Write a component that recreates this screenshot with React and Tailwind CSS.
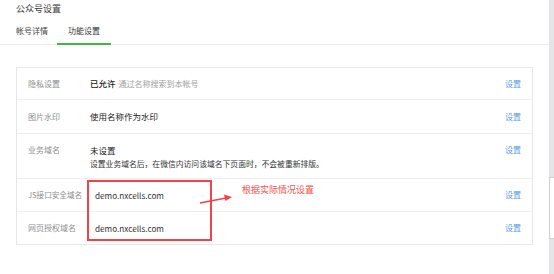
import React from 'react';

const Link = () => (
  <a href="#" className="text-[8px] leading-[14px] text-[#5b9be6] shrink-0">设置</a>
);

const App = () => {
  return (
    <div
      className="relative w-[554px] h-[274px] flex bg-white overflow-hidden text-[#333]"
      style={{ fontFamily: '"Noto Sans CJK SC", "Noto Sans", sans-serif' }}
    >
      <div className="w-[549px] flex flex-col">
        <div className="h-[18px] pl-[16px] text-[9px] leading-[18px] text-[#3a3a3a]">公众号设置</div>

        <div className="flex items-end h-[27px] border-b border-[#ededed] text-[8px]">
          <div className="ml-[16px] h-[26px] leading-[26px] text-[#444]">帐号详情</div>
          <div className="ml-[9px] px-[11px] h-[27px] leading-[26px] text-[#333] border-b-2 border-[#44b549] -mb-px">
            功能设置
          </div>
        </div>

        <div className="mt-[22px] ml-[16px] w-[517px] border border-[#e7e7eb] flex flex-col">
          <div className="h-[32px] flex items-center pl-[11px] pr-[11px] border-b border-[#eee]">
            <div className="w-[62px] text-[8px] text-[#8d8d8d]">隐私设置</div>
            <div className="flex-1 text-[8.5px] flex items-center gap-[3px]">
              <span className="text-[#222] font-medium">已允许</span>
              <span className="text-[8px] text-[#a0a0a0]">通过名称搜索到本帐号</span>
            </div>
            <Link />
          </div>

          <div className="h-[34px] flex items-center pl-[11px] pr-[11px] border-b border-[#eee]">
            <div className="w-[62px] text-[8px] text-[#8d8d8d]">图片水印</div>
            <div className="flex-1 text-[8.5px] text-[#222]">使用名称作为水印</div>
            <Link />
          </div>

          <div className="h-[45px] flex items-start pt-[9px] pl-[11px] pr-[11px] border-b border-[#eee]">
            <div className="w-[62px] text-[8px] leading-[14px] text-[#8d8d8d]">业务域名</div>
            <div className="flex-1 flex flex-col">
              <span className="text-[8.5px] leading-[14px] text-[#222]">未设置</span>
              <span className="text-[7.8px] leading-[14px] text-[#333]">
                设置业务域名后，在微信内访问该域名下页面时，不会被重新排版。
              </span>
            </div>
            <Link />
          </div>

          <div className="h-[33px] flex items-center pl-[11px] pr-[11px] border-b border-[#eee]">
            <div className="w-[62px] text-[7.6px] text-[#8d8d8d] whitespace-nowrap">JS接口安全域名</div>
            <div className="flex-1 pl-[5px] text-[8.2px] text-[#333]">demo.nxcells.com</div>
            <Link />
          </div>

          <div className="h-[32px] flex items-center pl-[11px] pr-[11px]">
            <div className="w-[62px] text-[8px] text-[#8d8d8d]">网页授权域名</div>
            <div className="flex-1 pl-[5px] text-[8.2px] text-[#333]">demo.nxcells.com</div>
            <Link />
          </div>
        </div>
      </div>

      <div className="w-[5px] bg-[#e4e4e9] pt-[177px]">
        <div className="h-[62px] bg-white border-l border-y border-[#cfcfd6]"></div>
      </div>

      {/* annotation */}
      <div className="absolute left-[87px] top-[180px] w-[125px] h-[61px] border-2 border-[#f2424a]"></div>
      <svg className="absolute left-[198px] top-[192px]" width="40" height="14" viewBox="0 0 40 14">
        <line x1="2" y1="11" x2="28" y2="6" stroke="#f2424a" strokeWidth="1.3" />
        <polygon points="34,5 26,2.5 27.5,9" fill="#f2424a" />
      </svg>
      <div className="absolute left-[242px] top-[184px] text-[9px] leading-[12px] text-[#f4514f]">根据实际情况设置</div>
    </div>
  );
};

export default App;
